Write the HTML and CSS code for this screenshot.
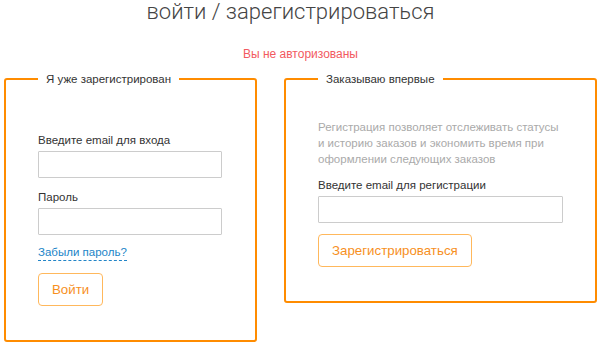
FILE: index.html
```html
<!DOCTYPE html>
<html lang="ru">
<head>
  <meta charset="UTF-8" />
  <title>Вход / регистрация</title>
  <link rel="stylesheet" href="styles.css">
</head>
<body>
  <h1 class="title">войти / зарегистрироваться</h1>
  <p class="auth-msg">Вы не авторизованы</p>

  <div class="boxes">
    <!-- ВХОД -->
    <form class="box box-login" autocomplete="off">
      <fieldset>
        <legend>Я уже зарегистрирован</legend>
        <label for="login-email">Введите email для входа</label>
        <input id="login-email" type="email" />
        <label for="login-pass">Пароль</label>
        <input id="login-pass" type="password" />
        <a href="#" class="forgot">Забыли пароль?</a>
        <button type="submit" class="btn">Войти</button>
      </fieldset>
    </form>

    <!-- РЕГИСТРАЦИЯ -->
    <form class="box box-reg" autocomplete="off">
      <fieldset>
        <legend>Заказываю впервые</legend>
        <p class="hint">Регистрация позволяет отслеживать статусы и историю заказов и экономить время при оформлении следующих заказов</p>
        <label for="reg-email">Введите email для регистрации</label>
        <input id="reg-email" type="email" class="wide" />
        <button type="submit" class="btn">Зарегистрироваться</button>
      </fieldset>
    </form>
  </div>
</body>
</html>
```

FILE: styles.css
```css
body{margin:0;padding:0 3px 0 4px;font-family:"Liberation Sans",Arial,sans-serif;font-size:11.5px;line-height:16px;color:#333;background:#fff}
.title{margin:-2px 0 0;padding-right:20px;font-family:Roboto,sans-serif;font-weight:300;font-size:22px;line-height:28px;text-align:center;color:#444}
.auth-msg{margin:20px 0 0;text-align:center;color:#f25a5f;font-size:12px}
.boxes{display:grid;grid-template-columns:253px 313px;column-gap:27px;align-items:start;margin-top:8px}
fieldset{margin:0;border:2px solid #ff8c00;border-radius:3px;padding:0 20px 34px 32px;min-width:0}
legend{padding:0 8px;font-size:11.5px;line-height:18px;color:#333}
.box-login fieldset{padding-top:44px;padding-bottom:34px}
.box-reg fieldset{padding-top:31px}
label{display:block;margin-bottom:3px}
input{display:block;box-sizing:border-box;width:184px;height:27px;margin:0 0 11px;padding:0 6px;border:1px solid #ccc;border-radius:1px;font:inherit}
input.wide{width:245px}
.hint{margin:0 0 10px;width:245px;color:#aaa}
.forgot{display:table;margin-top:-1px;color:#2184c7;text-decoration:none;border-bottom:1px dashed #2184c7;line-height:15px}
.btn{display:block;cursor:pointer;background:#fff;border:1px solid #ffb85c;border-radius:4px;color:#f7901e;font-family:"Liberation Sans",Arial,sans-serif;font-size:13.3px;height:33px;padding:0 13px}
.box-login .btn{margin-top:12px}
.box-reg .btn{margin-top:0}
```
